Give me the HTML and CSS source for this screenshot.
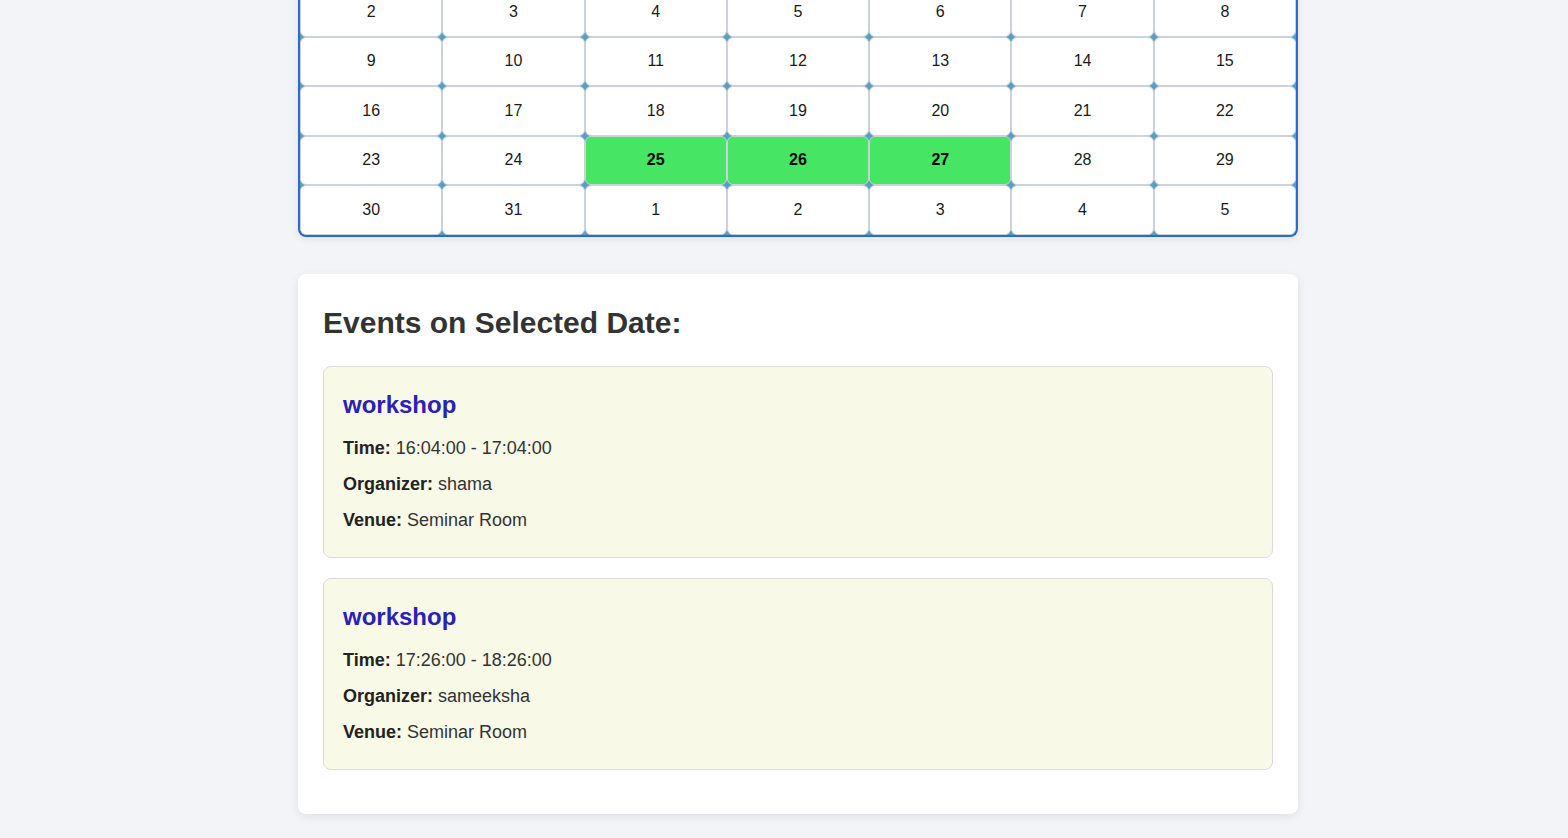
FILE: index.html
```html
<!DOCTYPE html>
<html lang="en">
<head>
<meta charset="utf-8">
<title>Event Calendar</title>
<link rel="stylesheet" href="styles.css">
</head>
<body>
<div class="page">
  <div class="calendar">
    <div class="grid">
      <div class="tile">2</div><div class="tile">3</div><div class="tile">4</div><div class="tile">5</div><div class="tile">6</div><div class="tile">7</div><div class="tile">8</div>
      <div class="tile">9</div><div class="tile">10</div><div class="tile">11</div><div class="tile">12</div><div class="tile">13</div><div class="tile">14</div><div class="tile">15</div>
      <div class="tile">16</div><div class="tile">17</div><div class="tile">18</div><div class="tile">19</div><div class="tile">20</div><div class="tile">21</div><div class="tile">22</div>
      <div class="tile">23</div><div class="tile">24</div><div class="tile event">25</div><div class="tile event">26</div><div class="tile event">27</div><div class="tile">28</div><div class="tile">29</div>
      <div class="tile">30</div><div class="tile">31</div><div class="tile">1</div><div class="tile">2</div><div class="tile">3</div><div class="tile">4</div><div class="tile">5</div>
    </div>
  </div>

  <section class="events">
    <h2 class="events-title">Events on Selected Date:</h2>
    <div class="event-card">
      <h3 class="event-name">workshop</h3>
      <p class="event-line"><strong>Time:</strong> 16:04:00 - 17:04:00</p>
      <p class="event-line"><strong>Organizer:</strong> shama</p>
      <p class="event-line"><strong>Venue:</strong> Seminar Room</p>
    </div>
    <div class="event-card">
      <h3 class="event-name">workshop</h3>
      <p class="event-line"><strong>Time:</strong> 17:26:00 - 18:26:00</p>
      <p class="event-line"><strong>Organizer:</strong> sameeksha</p>
      <p class="event-line"><strong>Venue:</strong> Seminar Room</p>
    </div>
  </section>
</div>
</body>
</html>
```

FILE: styles.css
```css
html, body {
  margin: 0;
  padding: 0;
}

body {
  background: #f3f4f8;
  font-family: "Liberation Sans", Arial, sans-serif;
  color: #222;
}

.page {
  width: 1000px;
  margin: 0 auto;
  padding: 0 0 24px;
  position: relative;
  left: 14px;
}

.calendar {
  margin-top: -13px;
  border: 2px solid #2b6ac6;
  border-top: 0;
  border-radius: 0 0 8px 8px;
  background: #5b9fc0;
  overflow: hidden;
  box-shadow: 0 2px 8px rgba(0, 0, 0, 0.08);
}

.grid {
  display: grid;
  grid-template-columns: repeat(7, 1fr);
}

.tile {
  background: #fff;
  border: 1px solid #ccd2d9;
  border-radius: 6px;
  padding: 13.5px 0 14.5px;
  line-height: 19.5px;
  font-size: 16px;
  text-align: center;
  color: #1a1a1a;
}

.tile.event {
  background: #46e563;
  font-weight: bold;
  color: #000;
}

.events {
  margin-top: 37px;
  background: #fff;
  border-radius: 8px;
  padding: 24px 25px;
  box-shadow: 0 3px 10px rgba(0, 0, 0, 0.08);
}

.events-title {
  margin: 8px 0 26px;
  font-size: 30px;
  line-height: 34px;
  font-weight: bold;
  color: #333;
}

.event-card {
  background: #f8f9e7;
  border: 1px solid #dcdcd6;
  border-radius: 8px;
  padding: 24px 19px 11px;
  margin-bottom: 20px;
}

.event-name {
  margin: 0 0 20px;
  font-size: 24px;
  line-height: 27px;
  font-weight: bold;
  color: #2b21b2;
}

.event-line {
  margin: 16px 0;
  font-size: 18px;
  line-height: 20px;
  color: #333;
}

.event-line strong {
  color: #222;
}
```
